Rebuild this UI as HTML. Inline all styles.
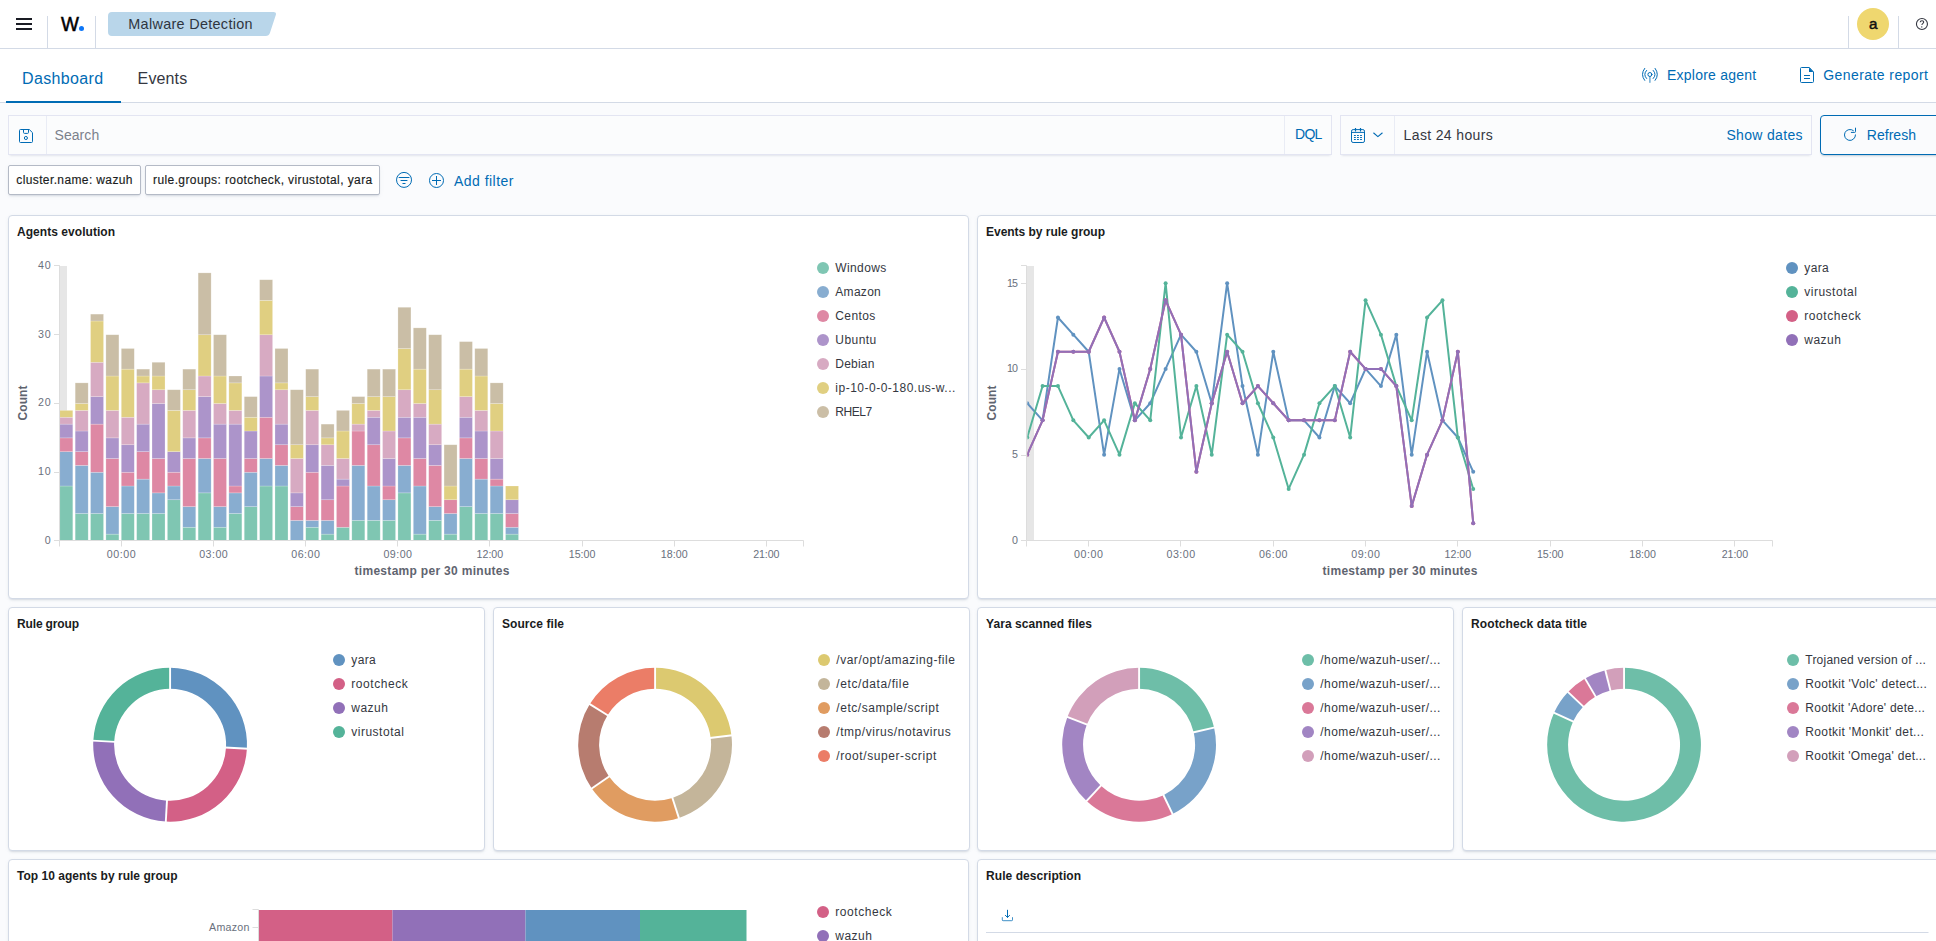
<!DOCTYPE html>
<html lang="en"><head><meta charset="utf-8"><title>Malware Detection - Wazuh</title>
<style>
*{box-sizing:border-box;margin:0;padding:0}
html,body{width:1936px;height:941px;overflow:hidden;background:#fafbfd;}
body{font-family:"Liberation Sans",sans-serif;color:#343741;position:relative;-webkit-font-smoothing:antialiased}
.t{position:absolute;white-space:nowrap;display:block}
.abs{position:absolute}
header{position:absolute;left:0;top:0;width:1936px;height:49px;background:#fff;border-bottom:1px solid #d3dae6}
.vsep{position:absolute;width:1px;background:#d3dae6;top:16px;height:32px}
nav.tabs{position:absolute;left:0;top:49px;width:1936px;height:54px;background:#fff;border-bottom:1px solid #d3dae6}
.ctl{position:absolute;background:#fbfcfd;box-shadow:0 1px 1px -1px rgba(152,162,179,.2),0 3px 2px -2px rgba(152,162,179,.2),inset 0 0 0 1px rgba(19,34,149,.1)}
.pill{position:absolute;top:165px;height:30px;background:#fff;border:1px solid #b4bac6;border-radius:2px;box-shadow:0 2px 2px -1px rgba(152,162,179,.3),0 1px 5px -2px rgba(152,162,179,.3)}
.panel{position:absolute;background:#fff;border:1px solid #d3dae6;border-radius:4px;box-shadow:0 2px 2px -1px rgba(152,162,179,.3),0 1px 5px -2px rgba(152,162,179,.3);overflow:hidden}
.panel svg{position:absolute;left:-1px;top:-1px;font-family:"Liberation Sans",sans-serif}
svg text{font-family:"Liberation Sans",sans-serif}
h2.pt{position:absolute;left:8px;font-size:12px;font-weight:700;color:#1a1c21;white-space:nowrap}
</style></head><body>
<header>
<svg class="abs" style="left:16px;top:16px" width="16" height="16" viewBox="0 0 16 16"><path d="M0 3H16M0 8H16M0 13H16" stroke="#1a1c24" stroke-width="2" fill="none"/></svg>
<div class="vsep" style="left:47px"></div>
<span class="t" style="left:60.50px;top:11.32px;font-size:20.2px;line-height:26px;color:#000;font-weight:400;letter-spacing:0.000px;-webkit-text-stroke:0.55px #000;transform:scaleX(0.94);transform-origin:0 0;">W</span>
<div class="abs" style="left:78.95px;top:26.35px;width:5px;height:5px;border-radius:50%;background:#0d76f7"></div>
<div class="vsep" style="left:95px"></div>
<svg class="abs" style="left:108px;top:12px" width="170" height="24" viewBox="0 0 170 24"><path d="M4 0H165.6Q168.8 0 167.8 3L161.9 21Q160.9 24 157.7 24H4Q0 24 0 20V4Q0 0 4 0Z" fill="#b9d6ea"/></svg>
<span class="t" style="left:128.30px;top:14.54px;font-size:14.4px;line-height:19px;color:#2f3540;font-weight:400;letter-spacing:0.316px;">Malware Detection</span>
<div class="vsep" style="left:1848px"></div>
<div class="abs" style="left:1857px;top:8px;width:32px;height:32px;border-radius:50%;background:#efd76f"></div>
<span class="t" style="left:1868.90px;top:13.98px;font-size:15.2px;line-height:20px;color:#111;font-weight:400;letter-spacing:0.000px;-webkit-text-stroke:0.5px #111;">a</span>
<div class="vsep" style="left:1898px"></div>
<svg class="abs" style="left:1914px;top:16px" width="16" height="16" viewBox="0 0 16 16"><circle cx="7.95" cy="8" r="5.5" fill="none" stroke="#343741" stroke-width="1.1"/><path d="M6.2 6.3Q6.3 4.7 8 4.7Q9.7 4.7 9.7 6.1Q9.7 7 8.7 7.6Q7.9 8.1 7.85 8.9" fill="none" stroke="#343741" stroke-width="1.1"/><circle cx="7.75" cy="10.9" r="0.7" fill="#343741"/></svg>
</header>
<nav class="tabs">
</nav>
<span class="t" style="left:22.00px;top:68.31px;font-size:16px;line-height:21px;color:#006BB4;font-weight:400;letter-spacing:0.367px;">Dashboard</span>
<div class="abs" style="left:6px;top:101px;width:115px;height:2px;background:#006BB4"></div>
<span class="t" style="left:137.60px;top:68.31px;font-size:16px;line-height:21px;color:#343741;font-weight:400;letter-spacing:0.138px;">Events</span>
<svg class="abs" style="left:1641px;top:67px" width="18" height="16" viewBox="0 0 18 16"><g fill="none" stroke="#006BB4" stroke-width="1" stroke-linecap="round"><circle cx="8.9" cy="7.5" r="2"/><path d="M8.9 9.9V15.2" stroke-width="1.4" stroke-opacity="0.6"/><path d="M5.6 3.4Q1.8 7.5 5.6 11.5"/><path d="M12.2 3.4Q16 7.5 12.2 11.5"/><path d="M3.7 1.4Q-0.9 7.5 3.7 13.4"/><path d="M14.1 1.4Q18.7 7.5 14.1 13.4"/></g></svg>
<span class="t" style="left:1667.00px;top:66.17px;font-size:14px;line-height:18px;color:#006BB4;font-weight:400;letter-spacing:0.226px;">Explore agent</span>
<svg class="abs" style="left:1800px;top:67px" width="14" height="16" viewBox="0 0 14 16"><path d="M1.5 .5H9.4L13.5 5V14.5Q13.5 15.5 12.5 15.5H1.5Q.5 15.5 .5 14.5V1.5Q.5 .5 1.5 .5Z" fill="none" stroke="#006BB4" stroke-width="1"/><path d="M9 .5V5H13.5Z" fill="#006BB4"/><path d="M4.4 8.5H9.6M4.4 11.5H9.6" stroke="#006BB4" stroke-width="1" stroke-linecap="round"/></svg>
<span class="t" style="left:1823.20px;top:66.17px;font-size:14px;line-height:18px;color:#006BB4;font-weight:400;letter-spacing:0.427px;">Generate report</span>
<div class="ctl" style="left:8px;top:115px;width:1324px;height:40px"></div>
<div class="abs" style="left:46px;top:116px;width:1px;height:38px;background:rgba(19,34,149,.075)"></div>
<div class="abs" style="left:1284px;top:116px;width:1px;height:38px;background:rgba(19,34,149,.075)"></div>
<svg class="abs" style="left:19px;top:129px" width="14" height="14" viewBox="0 0 14 14"><g fill="none" stroke="#006BB4" stroke-width="1"><path d="M1.5 .5H10.3L13.5 3.7V12.5Q13.5 13.5 12.5 13.5H1.5Q.5 13.5 .5 12.5V1.5Q.5 .5 1.5 .5Z"/><path d="M4.5 .5V3.4Q4.5 4.4 5.5 4.4H8.5Q9.5 4.4 9.5 3.4V.5"/><circle cx="6.9" cy="9" r="1.55"/></g></svg>
<span class="t" style="left:54.50px;top:125.57px;font-size:14px;line-height:18px;color:#7b818c;font-weight:400;letter-spacing:0.069px;">Search</span>
<span class="t" style="left:1295.00px;top:125.37px;font-size:14px;line-height:18px;color:#006BB4;font-weight:400;letter-spacing:-0.693px;">DQL</span>
<div class="ctl" style="left:1340px;top:115px;width:472px;height:40px"></div>
<div class="abs" style="left:1394px;top:116px;width:1px;height:38px;background:rgba(19,34,149,.075)"></div>
<svg class="abs" style="left:1351px;top:128px" width="14" height="15" viewBox="0 0 14 15"><g fill="none" stroke="#006BB4" stroke-width="1"><rect x="0.5" y="1.6" width="13" height="12.9" rx="1.6"/><path d="M0.5 4.4H13.5"/><path d="M4.5 0V3M9.5 0V3" stroke-width="1.2" stroke-linecap="round"/></g><g fill="#006BB4"><rect x="2.95" y="7.00" width="1.9" height="1" rx="0.3"/><rect x="2.95" y="9.00" width="1.9" height="1" rx="0.3"/><rect x="2.95" y="10.95" width="1.9" height="1" rx="0.3"/><rect x="6.00" y="7.00" width="1.9" height="1" rx="0.3"/><rect x="6.00" y="9.00" width="1.9" height="1" rx="0.3"/><rect x="6.00" y="10.95" width="1.9" height="1" rx="0.3"/><rect x="9.05" y="7.00" width="1.9" height="1" rx="0.3"/><rect x="9.05" y="9.00" width="1.9" height="1" rx="0.3"/><rect x="9.05" y="10.95" width="1.9" height="1" rx="0.3"/></g></svg>
<svg class="abs" style="left:1373px;top:132px" width="11" height="7" viewBox="0 0 11 7"><path d="M0.7 1L4.9 4.6L9.2 1" fill="none" stroke="#006BB4" stroke-width="1.1" stroke-linecap="round" stroke-linejoin="round"/></svg>
<span class="t" style="left:1403.60px;top:126.37px;font-size:14px;line-height:18px;color:#343741;font-weight:400;letter-spacing:0.356px;">Last 24 hours</span>
<span class="t" style="left:1726.40px;top:126.17px;font-size:14px;line-height:18px;color:#006BB4;font-weight:400;letter-spacing:0.338px;">Show dates</span>
<div class="abs" style="left:1820px;top:115px;width:130px;height:40px;border:1px solid #006BB4;border-radius:4px;box-shadow:0 2px 2px -1px rgba(54,97,126,.3)"></div>
<svg class="abs" style="left:1843px;top:127px" width="15" height="15" viewBox="0 0 15 15"><g fill="none" stroke="#006BB4" stroke-width="1" stroke-linecap="round"><path d="M12.5 7.9A5.5 5.5 0 1 1 10.37 3.57"/><path d="M12.5 1.1V4.6Q12.5 5.4 11.7 5.4H8.3"/></g></svg>
<span class="t" style="left:1866.80px;top:126.17px;font-size:14px;line-height:18px;color:#006BB4;font-weight:400;letter-spacing:0.030px;">Refresh</span>
<div class="pill" style="left:8px;width:133px"></div>
<span class="t" style="left:16.30px;top:172.03px;font-size:12px;line-height:16px;color:#1a1c21;font-weight:400;letter-spacing:0.379px;-webkit-text-stroke:0.15px #1a1c21;">cluster.name: wazuh</span>
<div class="pill" style="left:145px;width:235px"></div>
<span class="t" style="left:153.00px;top:172.03px;font-size:12px;line-height:16px;color:#1a1c21;font-weight:400;letter-spacing:0.405px;-webkit-text-stroke:0.15px #1a1c21;">rule.groups: rootcheck, virustotal, yara</span>
<svg class="abs" style="left:395px;top:171px" width="18" height="18" viewBox="0 0 18 18"><circle cx="9.03" cy="8.9" r="7.5" fill="none" stroke="#006BB4" stroke-width="1"/><path d="M4.1 6.45H14M6 9.5H12M7.9 12.5H10.1" stroke="#006BB4" stroke-width="1.1" fill="none" stroke-linecap="round"/></svg>
<svg class="abs" style="left:428px;top:172px" width="18" height="18" viewBox="0 0 18 18"><circle cx="8.5" cy="8.5" r="7" fill="none" stroke="#006BB4" stroke-width="1"/><path d="M8.5 4V13M4 8.5H13" stroke="#006BB4" stroke-width="1" fill="none"/></svg>
<span class="t" style="left:453.90px;top:172.37px;font-size:14px;line-height:18px;color:#006BB4;font-weight:400;letter-spacing:0.484px;">Add filter</span>
<section class="panel" style="left:8px;top:215px;width:961px;height:384px"><h2 class="pt" style="top:8px;line-height:16px;letter-spacing:0.045px">Agents evolution</h2><svg width="961" height="384" viewBox="8 215 961 384"><rect x="60" y="266" width="7" height="275" fill="#e6e6e6"/>
<rect x="59.80" y="486.00" width="13.0" height="55.00" fill="#7fc6b2" stroke="#fff" stroke-opacity="0.35" stroke-width="0.6"/>
<rect x="59.80" y="451.62" width="13.0" height="34.38" fill="#88add0" stroke="#fff" stroke-opacity="0.35" stroke-width="0.6"/>
<rect x="59.80" y="437.88" width="13.0" height="13.75" fill="#de88a4" stroke="#fff" stroke-opacity="0.35" stroke-width="0.6"/>
<rect x="59.80" y="424.12" width="13.0" height="13.75" fill="#ac94ca" stroke="#fff" stroke-opacity="0.35" stroke-width="0.6"/>
<rect x="59.80" y="417.25" width="13.0" height="6.88" fill="#d7aac2" stroke="#fff" stroke-opacity="0.35" stroke-width="0.6"/>
<rect x="59.80" y="410.38" width="13.0" height="6.88" fill="#e0cf81" stroke="#fff" stroke-opacity="0.35" stroke-width="0.6"/>
<rect x="75.17" y="513.50" width="13.0" height="27.50" fill="#7fc6b2" stroke="#fff" stroke-opacity="0.35" stroke-width="0.6"/>
<rect x="75.17" y="465.38" width="13.0" height="48.12" fill="#88add0" stroke="#fff" stroke-opacity="0.35" stroke-width="0.6"/>
<rect x="75.17" y="451.62" width="13.0" height="13.75" fill="#de88a4" stroke="#fff" stroke-opacity="0.35" stroke-width="0.6"/>
<rect x="75.17" y="431.00" width="13.0" height="20.62" fill="#ac94ca" stroke="#fff" stroke-opacity="0.35" stroke-width="0.6"/>
<rect x="75.17" y="410.38" width="13.0" height="20.62" fill="#d7aac2" stroke="#fff" stroke-opacity="0.35" stroke-width="0.6"/>
<rect x="75.17" y="403.50" width="13.0" height="6.88" fill="#e0cf81" stroke="#fff" stroke-opacity="0.35" stroke-width="0.6"/>
<rect x="75.17" y="382.88" width="13.0" height="20.62" fill="#cabea6" stroke="#fff" stroke-opacity="0.35" stroke-width="0.6"/>
<rect x="90.54" y="513.50" width="13.0" height="27.50" fill="#7fc6b2" stroke="#fff" stroke-opacity="0.35" stroke-width="0.6"/>
<rect x="90.54" y="472.25" width="13.0" height="41.25" fill="#88add0" stroke="#fff" stroke-opacity="0.35" stroke-width="0.6"/>
<rect x="90.54" y="424.12" width="13.0" height="48.12" fill="#de88a4" stroke="#fff" stroke-opacity="0.35" stroke-width="0.6"/>
<rect x="90.54" y="396.62" width="13.0" height="27.50" fill="#ac94ca" stroke="#fff" stroke-opacity="0.35" stroke-width="0.6"/>
<rect x="90.54" y="362.25" width="13.0" height="34.38" fill="#d7aac2" stroke="#fff" stroke-opacity="0.35" stroke-width="0.6"/>
<rect x="90.54" y="321.00" width="13.0" height="41.25" fill="#e0cf81" stroke="#fff" stroke-opacity="0.35" stroke-width="0.6"/>
<rect x="90.54" y="314.12" width="13.0" height="6.88" fill="#cabea6" stroke="#fff" stroke-opacity="0.35" stroke-width="0.6"/>
<rect x="105.91" y="534.12" width="13.0" height="6.88" fill="#7fc6b2" stroke="#fff" stroke-opacity="0.35" stroke-width="0.6"/>
<rect x="105.91" y="506.62" width="13.0" height="27.50" fill="#88add0" stroke="#fff" stroke-opacity="0.35" stroke-width="0.6"/>
<rect x="105.91" y="458.50" width="13.0" height="48.12" fill="#de88a4" stroke="#fff" stroke-opacity="0.35" stroke-width="0.6"/>
<rect x="105.91" y="437.88" width="13.0" height="20.62" fill="#ac94ca" stroke="#fff" stroke-opacity="0.35" stroke-width="0.6"/>
<rect x="105.91" y="410.38" width="13.0" height="27.50" fill="#d7aac2" stroke="#fff" stroke-opacity="0.35" stroke-width="0.6"/>
<rect x="105.91" y="376.00" width="13.0" height="34.38" fill="#e0cf81" stroke="#fff" stroke-opacity="0.35" stroke-width="0.6"/>
<rect x="105.91" y="334.75" width="13.0" height="41.25" fill="#cabea6" stroke="#fff" stroke-opacity="0.35" stroke-width="0.6"/>
<rect x="121.28" y="513.50" width="13.0" height="27.50" fill="#7fc6b2" stroke="#fff" stroke-opacity="0.35" stroke-width="0.6"/>
<rect x="121.28" y="486.00" width="13.0" height="27.50" fill="#88add0" stroke="#fff" stroke-opacity="0.35" stroke-width="0.6"/>
<rect x="121.28" y="472.25" width="13.0" height="13.75" fill="#de88a4" stroke="#fff" stroke-opacity="0.35" stroke-width="0.6"/>
<rect x="121.28" y="444.75" width="13.0" height="27.50" fill="#ac94ca" stroke="#fff" stroke-opacity="0.35" stroke-width="0.6"/>
<rect x="121.28" y="417.25" width="13.0" height="27.50" fill="#d7aac2" stroke="#fff" stroke-opacity="0.35" stroke-width="0.6"/>
<rect x="121.28" y="369.12" width="13.0" height="48.12" fill="#e0cf81" stroke="#fff" stroke-opacity="0.35" stroke-width="0.6"/>
<rect x="121.28" y="348.50" width="13.0" height="20.62" fill="#cabea6" stroke="#fff" stroke-opacity="0.35" stroke-width="0.6"/>
<rect x="136.65" y="513.50" width="13.0" height="27.50" fill="#7fc6b2" stroke="#fff" stroke-opacity="0.35" stroke-width="0.6"/>
<rect x="136.65" y="479.12" width="13.0" height="34.38" fill="#88add0" stroke="#fff" stroke-opacity="0.35" stroke-width="0.6"/>
<rect x="136.65" y="451.62" width="13.0" height="27.50" fill="#de88a4" stroke="#fff" stroke-opacity="0.35" stroke-width="0.6"/>
<rect x="136.65" y="424.12" width="13.0" height="27.50" fill="#ac94ca" stroke="#fff" stroke-opacity="0.35" stroke-width="0.6"/>
<rect x="136.65" y="382.88" width="13.0" height="41.25" fill="#d7aac2" stroke="#fff" stroke-opacity="0.35" stroke-width="0.6"/>
<rect x="136.65" y="376.00" width="13.0" height="6.88" fill="#e0cf81" stroke="#fff" stroke-opacity="0.35" stroke-width="0.6"/>
<rect x="136.65" y="369.12" width="13.0" height="6.88" fill="#cabea6" stroke="#fff" stroke-opacity="0.35" stroke-width="0.6"/>
<rect x="152.02" y="513.50" width="13.0" height="27.50" fill="#7fc6b2" stroke="#fff" stroke-opacity="0.35" stroke-width="0.6"/>
<rect x="152.02" y="492.88" width="13.0" height="20.62" fill="#88add0" stroke="#fff" stroke-opacity="0.35" stroke-width="0.6"/>
<rect x="152.02" y="458.50" width="13.0" height="34.38" fill="#de88a4" stroke="#fff" stroke-opacity="0.35" stroke-width="0.6"/>
<rect x="152.02" y="403.50" width="13.0" height="55.00" fill="#ac94ca" stroke="#fff" stroke-opacity="0.35" stroke-width="0.6"/>
<rect x="152.02" y="389.75" width="13.0" height="13.75" fill="#d7aac2" stroke="#fff" stroke-opacity="0.35" stroke-width="0.6"/>
<rect x="152.02" y="376.00" width="13.0" height="13.75" fill="#e0cf81" stroke="#fff" stroke-opacity="0.35" stroke-width="0.6"/>
<rect x="152.02" y="362.25" width="13.0" height="13.75" fill="#cabea6" stroke="#fff" stroke-opacity="0.35" stroke-width="0.6"/>
<rect x="167.39" y="499.75" width="13.0" height="41.25" fill="#7fc6b2" stroke="#fff" stroke-opacity="0.35" stroke-width="0.6"/>
<rect x="167.39" y="486.00" width="13.0" height="13.75" fill="#88add0" stroke="#fff" stroke-opacity="0.35" stroke-width="0.6"/>
<rect x="167.39" y="472.25" width="13.0" height="13.75" fill="#de88a4" stroke="#fff" stroke-opacity="0.35" stroke-width="0.6"/>
<rect x="167.39" y="451.62" width="13.0" height="20.62" fill="#ac94ca" stroke="#fff" stroke-opacity="0.35" stroke-width="0.6"/>
<rect x="167.39" y="410.38" width="13.0" height="41.25" fill="#e0cf81" stroke="#fff" stroke-opacity="0.35" stroke-width="0.6"/>
<rect x="167.39" y="389.75" width="13.0" height="20.62" fill="#cabea6" stroke="#fff" stroke-opacity="0.35" stroke-width="0.6"/>
<rect x="182.76" y="527.25" width="13.0" height="13.75" fill="#7fc6b2" stroke="#fff" stroke-opacity="0.35" stroke-width="0.6"/>
<rect x="182.76" y="506.62" width="13.0" height="20.62" fill="#88add0" stroke="#fff" stroke-opacity="0.35" stroke-width="0.6"/>
<rect x="182.76" y="458.50" width="13.0" height="48.12" fill="#de88a4" stroke="#fff" stroke-opacity="0.35" stroke-width="0.6"/>
<rect x="182.76" y="437.88" width="13.0" height="20.62" fill="#ac94ca" stroke="#fff" stroke-opacity="0.35" stroke-width="0.6"/>
<rect x="182.76" y="410.38" width="13.0" height="27.50" fill="#d7aac2" stroke="#fff" stroke-opacity="0.35" stroke-width="0.6"/>
<rect x="182.76" y="389.75" width="13.0" height="20.62" fill="#e0cf81" stroke="#fff" stroke-opacity="0.35" stroke-width="0.6"/>
<rect x="182.76" y="369.12" width="13.0" height="20.62" fill="#cabea6" stroke="#fff" stroke-opacity="0.35" stroke-width="0.6"/>
<rect x="198.13" y="492.88" width="13.0" height="48.12" fill="#7fc6b2" stroke="#fff" stroke-opacity="0.35" stroke-width="0.6"/>
<rect x="198.13" y="458.50" width="13.0" height="34.38" fill="#88add0" stroke="#fff" stroke-opacity="0.35" stroke-width="0.6"/>
<rect x="198.13" y="437.88" width="13.0" height="20.62" fill="#de88a4" stroke="#fff" stroke-opacity="0.35" stroke-width="0.6"/>
<rect x="198.13" y="396.62" width="13.0" height="41.25" fill="#ac94ca" stroke="#fff" stroke-opacity="0.35" stroke-width="0.6"/>
<rect x="198.13" y="376.00" width="13.0" height="20.62" fill="#d7aac2" stroke="#fff" stroke-opacity="0.35" stroke-width="0.6"/>
<rect x="198.13" y="334.75" width="13.0" height="41.25" fill="#e0cf81" stroke="#fff" stroke-opacity="0.35" stroke-width="0.6"/>
<rect x="198.13" y="272.88" width="13.0" height="61.88" fill="#cabea6" stroke="#fff" stroke-opacity="0.35" stroke-width="0.6"/>
<rect x="213.50" y="527.25" width="13.0" height="13.75" fill="#7fc6b2" stroke="#fff" stroke-opacity="0.35" stroke-width="0.6"/>
<rect x="213.50" y="506.62" width="13.0" height="20.62" fill="#88add0" stroke="#fff" stroke-opacity="0.35" stroke-width="0.6"/>
<rect x="213.50" y="458.50" width="13.0" height="48.12" fill="#de88a4" stroke="#fff" stroke-opacity="0.35" stroke-width="0.6"/>
<rect x="213.50" y="424.12" width="13.0" height="34.38" fill="#ac94ca" stroke="#fff" stroke-opacity="0.35" stroke-width="0.6"/>
<rect x="213.50" y="403.50" width="13.0" height="20.62" fill="#d7aac2" stroke="#fff" stroke-opacity="0.35" stroke-width="0.6"/>
<rect x="213.50" y="376.00" width="13.0" height="27.50" fill="#e0cf81" stroke="#fff" stroke-opacity="0.35" stroke-width="0.6"/>
<rect x="213.50" y="334.75" width="13.0" height="41.25" fill="#cabea6" stroke="#fff" stroke-opacity="0.35" stroke-width="0.6"/>
<rect x="228.87" y="513.50" width="13.0" height="27.50" fill="#7fc6b2" stroke="#fff" stroke-opacity="0.35" stroke-width="0.6"/>
<rect x="228.87" y="492.88" width="13.0" height="20.62" fill="#88add0" stroke="#fff" stroke-opacity="0.35" stroke-width="0.6"/>
<rect x="228.87" y="486.00" width="13.0" height="6.88" fill="#de88a4" stroke="#fff" stroke-opacity="0.35" stroke-width="0.6"/>
<rect x="228.87" y="424.12" width="13.0" height="61.88" fill="#ac94ca" stroke="#fff" stroke-opacity="0.35" stroke-width="0.6"/>
<rect x="228.87" y="410.38" width="13.0" height="13.75" fill="#d7aac2" stroke="#fff" stroke-opacity="0.35" stroke-width="0.6"/>
<rect x="228.87" y="382.88" width="13.0" height="27.50" fill="#e0cf81" stroke="#fff" stroke-opacity="0.35" stroke-width="0.6"/>
<rect x="228.87" y="376.00" width="13.0" height="6.88" fill="#cabea6" stroke="#fff" stroke-opacity="0.35" stroke-width="0.6"/>
<rect x="244.24" y="506.62" width="13.0" height="34.38" fill="#7fc6b2" stroke="#fff" stroke-opacity="0.35" stroke-width="0.6"/>
<rect x="244.24" y="472.25" width="13.0" height="34.38" fill="#88add0" stroke="#fff" stroke-opacity="0.35" stroke-width="0.6"/>
<rect x="244.24" y="458.50" width="13.0" height="13.75" fill="#de88a4" stroke="#fff" stroke-opacity="0.35" stroke-width="0.6"/>
<rect x="244.24" y="431.00" width="13.0" height="27.50" fill="#ac94ca" stroke="#fff" stroke-opacity="0.35" stroke-width="0.6"/>
<rect x="244.24" y="417.25" width="13.0" height="13.75" fill="#e0cf81" stroke="#fff" stroke-opacity="0.35" stroke-width="0.6"/>
<rect x="244.24" y="396.62" width="13.0" height="20.62" fill="#cabea6" stroke="#fff" stroke-opacity="0.35" stroke-width="0.6"/>
<rect x="259.61" y="486.00" width="13.0" height="55.00" fill="#7fc6b2" stroke="#fff" stroke-opacity="0.35" stroke-width="0.6"/>
<rect x="259.61" y="458.50" width="13.0" height="27.50" fill="#88add0" stroke="#fff" stroke-opacity="0.35" stroke-width="0.6"/>
<rect x="259.61" y="417.25" width="13.0" height="41.25" fill="#de88a4" stroke="#fff" stroke-opacity="0.35" stroke-width="0.6"/>
<rect x="259.61" y="376.00" width="13.0" height="41.25" fill="#ac94ca" stroke="#fff" stroke-opacity="0.35" stroke-width="0.6"/>
<rect x="259.61" y="334.75" width="13.0" height="41.25" fill="#d7aac2" stroke="#fff" stroke-opacity="0.35" stroke-width="0.6"/>
<rect x="259.61" y="300.38" width="13.0" height="34.38" fill="#e0cf81" stroke="#fff" stroke-opacity="0.35" stroke-width="0.6"/>
<rect x="259.61" y="279.75" width="13.0" height="20.62" fill="#cabea6" stroke="#fff" stroke-opacity="0.35" stroke-width="0.6"/>
<rect x="274.98" y="486.00" width="13.0" height="55.00" fill="#7fc6b2" stroke="#fff" stroke-opacity="0.35" stroke-width="0.6"/>
<rect x="274.98" y="465.38" width="13.0" height="20.62" fill="#88add0" stroke="#fff" stroke-opacity="0.35" stroke-width="0.6"/>
<rect x="274.98" y="444.75" width="13.0" height="20.62" fill="#de88a4" stroke="#fff" stroke-opacity="0.35" stroke-width="0.6"/>
<rect x="274.98" y="424.12" width="13.0" height="20.62" fill="#ac94ca" stroke="#fff" stroke-opacity="0.35" stroke-width="0.6"/>
<rect x="274.98" y="389.75" width="13.0" height="34.38" fill="#d7aac2" stroke="#fff" stroke-opacity="0.35" stroke-width="0.6"/>
<rect x="274.98" y="382.88" width="13.0" height="6.88" fill="#e0cf81" stroke="#fff" stroke-opacity="0.35" stroke-width="0.6"/>
<rect x="274.98" y="348.50" width="13.0" height="34.38" fill="#cabea6" stroke="#fff" stroke-opacity="0.35" stroke-width="0.6"/>
<rect x="290.35" y="520.38" width="13.0" height="20.62" fill="#88add0" stroke="#fff" stroke-opacity="0.35" stroke-width="0.6"/>
<rect x="290.35" y="506.62" width="13.0" height="13.75" fill="#de88a4" stroke="#fff" stroke-opacity="0.35" stroke-width="0.6"/>
<rect x="290.35" y="492.88" width="13.0" height="13.75" fill="#ac94ca" stroke="#fff" stroke-opacity="0.35" stroke-width="0.6"/>
<rect x="290.35" y="458.50" width="13.0" height="34.38" fill="#d7aac2" stroke="#fff" stroke-opacity="0.35" stroke-width="0.6"/>
<rect x="290.35" y="444.75" width="13.0" height="13.75" fill="#e0cf81" stroke="#fff" stroke-opacity="0.35" stroke-width="0.6"/>
<rect x="290.35" y="389.75" width="13.0" height="55.00" fill="#cabea6" stroke="#fff" stroke-opacity="0.35" stroke-width="0.6"/>
<rect x="305.72" y="527.25" width="13.0" height="13.75" fill="#7fc6b2" stroke="#fff" stroke-opacity="0.35" stroke-width="0.6"/>
<rect x="305.72" y="520.38" width="13.0" height="6.88" fill="#88add0" stroke="#fff" stroke-opacity="0.35" stroke-width="0.6"/>
<rect x="305.72" y="472.25" width="13.0" height="48.12" fill="#de88a4" stroke="#fff" stroke-opacity="0.35" stroke-width="0.6"/>
<rect x="305.72" y="444.75" width="13.0" height="27.50" fill="#ac94ca" stroke="#fff" stroke-opacity="0.35" stroke-width="0.6"/>
<rect x="305.72" y="410.38" width="13.0" height="34.38" fill="#d7aac2" stroke="#fff" stroke-opacity="0.35" stroke-width="0.6"/>
<rect x="305.72" y="396.62" width="13.0" height="13.75" fill="#e0cf81" stroke="#fff" stroke-opacity="0.35" stroke-width="0.6"/>
<rect x="305.72" y="369.12" width="13.0" height="27.50" fill="#cabea6" stroke="#fff" stroke-opacity="0.35" stroke-width="0.6"/>
<rect x="321.09" y="534.12" width="13.0" height="6.88" fill="#7fc6b2" stroke="#fff" stroke-opacity="0.35" stroke-width="0.6"/>
<rect x="321.09" y="520.38" width="13.0" height="13.75" fill="#88add0" stroke="#fff" stroke-opacity="0.35" stroke-width="0.6"/>
<rect x="321.09" y="499.75" width="13.0" height="20.62" fill="#de88a4" stroke="#fff" stroke-opacity="0.35" stroke-width="0.6"/>
<rect x="321.09" y="465.38" width="13.0" height="34.38" fill="#ac94ca" stroke="#fff" stroke-opacity="0.35" stroke-width="0.6"/>
<rect x="321.09" y="444.75" width="13.0" height="20.62" fill="#d7aac2" stroke="#fff" stroke-opacity="0.35" stroke-width="0.6"/>
<rect x="321.09" y="437.88" width="13.0" height="6.88" fill="#e0cf81" stroke="#fff" stroke-opacity="0.35" stroke-width="0.6"/>
<rect x="321.09" y="424.12" width="13.0" height="13.75" fill="#cabea6" stroke="#fff" stroke-opacity="0.35" stroke-width="0.6"/>
<rect x="336.46" y="527.25" width="13.0" height="13.75" fill="#7fc6b2" stroke="#fff" stroke-opacity="0.35" stroke-width="0.6"/>
<rect x="336.46" y="486.00" width="13.0" height="41.25" fill="#de88a4" stroke="#fff" stroke-opacity="0.35" stroke-width="0.6"/>
<rect x="336.46" y="479.12" width="13.0" height="6.88" fill="#ac94ca" stroke="#fff" stroke-opacity="0.35" stroke-width="0.6"/>
<rect x="336.46" y="458.50" width="13.0" height="20.62" fill="#d7aac2" stroke="#fff" stroke-opacity="0.35" stroke-width="0.6"/>
<rect x="336.46" y="431.00" width="13.0" height="27.50" fill="#e0cf81" stroke="#fff" stroke-opacity="0.35" stroke-width="0.6"/>
<rect x="336.46" y="410.38" width="13.0" height="20.62" fill="#cabea6" stroke="#fff" stroke-opacity="0.35" stroke-width="0.6"/>
<rect x="351.83" y="520.38" width="13.0" height="20.62" fill="#7fc6b2" stroke="#fff" stroke-opacity="0.35" stroke-width="0.6"/>
<rect x="351.83" y="465.38" width="13.0" height="55.00" fill="#88add0" stroke="#fff" stroke-opacity="0.35" stroke-width="0.6"/>
<rect x="351.83" y="431.00" width="13.0" height="34.38" fill="#de88a4" stroke="#fff" stroke-opacity="0.35" stroke-width="0.6"/>
<rect x="351.83" y="424.12" width="13.0" height="6.88" fill="#d7aac2" stroke="#fff" stroke-opacity="0.35" stroke-width="0.6"/>
<rect x="351.83" y="403.50" width="13.0" height="20.62" fill="#e0cf81" stroke="#fff" stroke-opacity="0.35" stroke-width="0.6"/>
<rect x="351.83" y="396.62" width="13.0" height="6.88" fill="#cabea6" stroke="#fff" stroke-opacity="0.35" stroke-width="0.6"/>
<rect x="367.20" y="520.38" width="13.0" height="20.62" fill="#7fc6b2" stroke="#fff" stroke-opacity="0.35" stroke-width="0.6"/>
<rect x="367.20" y="486.00" width="13.0" height="34.38" fill="#88add0" stroke="#fff" stroke-opacity="0.35" stroke-width="0.6"/>
<rect x="367.20" y="444.75" width="13.0" height="41.25" fill="#de88a4" stroke="#fff" stroke-opacity="0.35" stroke-width="0.6"/>
<rect x="367.20" y="417.25" width="13.0" height="27.50" fill="#ac94ca" stroke="#fff" stroke-opacity="0.35" stroke-width="0.6"/>
<rect x="367.20" y="410.38" width="13.0" height="6.88" fill="#d7aac2" stroke="#fff" stroke-opacity="0.35" stroke-width="0.6"/>
<rect x="367.20" y="396.62" width="13.0" height="13.75" fill="#e0cf81" stroke="#fff" stroke-opacity="0.35" stroke-width="0.6"/>
<rect x="367.20" y="369.12" width="13.0" height="27.50" fill="#cabea6" stroke="#fff" stroke-opacity="0.35" stroke-width="0.6"/>
<rect x="382.57" y="520.38" width="13.0" height="20.62" fill="#7fc6b2" stroke="#fff" stroke-opacity="0.35" stroke-width="0.6"/>
<rect x="382.57" y="499.75" width="13.0" height="20.62" fill="#88add0" stroke="#fff" stroke-opacity="0.35" stroke-width="0.6"/>
<rect x="382.57" y="486.00" width="13.0" height="13.75" fill="#de88a4" stroke="#fff" stroke-opacity="0.35" stroke-width="0.6"/>
<rect x="382.57" y="458.50" width="13.0" height="27.50" fill="#ac94ca" stroke="#fff" stroke-opacity="0.35" stroke-width="0.6"/>
<rect x="382.57" y="431.00" width="13.0" height="27.50" fill="#d7aac2" stroke="#fff" stroke-opacity="0.35" stroke-width="0.6"/>
<rect x="382.57" y="396.62" width="13.0" height="34.38" fill="#e0cf81" stroke="#fff" stroke-opacity="0.35" stroke-width="0.6"/>
<rect x="382.57" y="369.12" width="13.0" height="27.50" fill="#cabea6" stroke="#fff" stroke-opacity="0.35" stroke-width="0.6"/>
<rect x="397.94" y="492.88" width="13.0" height="48.12" fill="#7fc6b2" stroke="#fff" stroke-opacity="0.35" stroke-width="0.6"/>
<rect x="397.94" y="465.38" width="13.0" height="27.50" fill="#88add0" stroke="#fff" stroke-opacity="0.35" stroke-width="0.6"/>
<rect x="397.94" y="437.88" width="13.0" height="27.50" fill="#de88a4" stroke="#fff" stroke-opacity="0.35" stroke-width="0.6"/>
<rect x="397.94" y="417.25" width="13.0" height="20.62" fill="#ac94ca" stroke="#fff" stroke-opacity="0.35" stroke-width="0.6"/>
<rect x="397.94" y="389.75" width="13.0" height="27.50" fill="#d7aac2" stroke="#fff" stroke-opacity="0.35" stroke-width="0.6"/>
<rect x="397.94" y="348.50" width="13.0" height="41.25" fill="#e0cf81" stroke="#fff" stroke-opacity="0.35" stroke-width="0.6"/>
<rect x="397.94" y="307.25" width="13.0" height="41.25" fill="#cabea6" stroke="#fff" stroke-opacity="0.35" stroke-width="0.6"/>
<rect x="413.31" y="534.12" width="13.0" height="6.88" fill="#7fc6b2" stroke="#fff" stroke-opacity="0.35" stroke-width="0.6"/>
<rect x="413.31" y="486.00" width="13.0" height="48.12" fill="#88add0" stroke="#fff" stroke-opacity="0.35" stroke-width="0.6"/>
<rect x="413.31" y="458.50" width="13.0" height="27.50" fill="#de88a4" stroke="#fff" stroke-opacity="0.35" stroke-width="0.6"/>
<rect x="413.31" y="417.25" width="13.0" height="41.25" fill="#ac94ca" stroke="#fff" stroke-opacity="0.35" stroke-width="0.6"/>
<rect x="413.31" y="403.50" width="13.0" height="13.75" fill="#d7aac2" stroke="#fff" stroke-opacity="0.35" stroke-width="0.6"/>
<rect x="413.31" y="369.12" width="13.0" height="34.38" fill="#e0cf81" stroke="#fff" stroke-opacity="0.35" stroke-width="0.6"/>
<rect x="413.31" y="327.88" width="13.0" height="41.25" fill="#cabea6" stroke="#fff" stroke-opacity="0.35" stroke-width="0.6"/>
<rect x="428.68" y="520.38" width="13.0" height="20.62" fill="#7fc6b2" stroke="#fff" stroke-opacity="0.35" stroke-width="0.6"/>
<rect x="428.68" y="506.62" width="13.0" height="13.75" fill="#88add0" stroke="#fff" stroke-opacity="0.35" stroke-width="0.6"/>
<rect x="428.68" y="465.38" width="13.0" height="41.25" fill="#de88a4" stroke="#fff" stroke-opacity="0.35" stroke-width="0.6"/>
<rect x="428.68" y="444.75" width="13.0" height="20.62" fill="#ac94ca" stroke="#fff" stroke-opacity="0.35" stroke-width="0.6"/>
<rect x="428.68" y="424.12" width="13.0" height="20.62" fill="#d7aac2" stroke="#fff" stroke-opacity="0.35" stroke-width="0.6"/>
<rect x="428.68" y="389.75" width="13.0" height="34.38" fill="#e0cf81" stroke="#fff" stroke-opacity="0.35" stroke-width="0.6"/>
<rect x="428.68" y="334.75" width="13.0" height="55.00" fill="#cabea6" stroke="#fff" stroke-opacity="0.35" stroke-width="0.6"/>
<rect x="444.05" y="534.12" width="13.0" height="6.88" fill="#7fc6b2" stroke="#fff" stroke-opacity="0.35" stroke-width="0.6"/>
<rect x="444.05" y="513.50" width="13.0" height="20.62" fill="#88add0" stroke="#fff" stroke-opacity="0.35" stroke-width="0.6"/>
<rect x="444.05" y="499.75" width="13.0" height="13.75" fill="#de88a4" stroke="#fff" stroke-opacity="0.35" stroke-width="0.6"/>
<rect x="444.05" y="486.00" width="13.0" height="13.75" fill="#e0cf81" stroke="#fff" stroke-opacity="0.35" stroke-width="0.6"/>
<rect x="444.05" y="444.75" width="13.0" height="41.25" fill="#cabea6" stroke="#fff" stroke-opacity="0.35" stroke-width="0.6"/>
<rect x="459.42" y="506.62" width="13.0" height="34.38" fill="#7fc6b2" stroke="#fff" stroke-opacity="0.35" stroke-width="0.6"/>
<rect x="459.42" y="458.50" width="13.0" height="48.12" fill="#88add0" stroke="#fff" stroke-opacity="0.35" stroke-width="0.6"/>
<rect x="459.42" y="437.88" width="13.0" height="20.62" fill="#de88a4" stroke="#fff" stroke-opacity="0.35" stroke-width="0.6"/>
<rect x="459.42" y="417.25" width="13.0" height="20.62" fill="#ac94ca" stroke="#fff" stroke-opacity="0.35" stroke-width="0.6"/>
<rect x="459.42" y="396.62" width="13.0" height="20.62" fill="#d7aac2" stroke="#fff" stroke-opacity="0.35" stroke-width="0.6"/>
<rect x="459.42" y="369.12" width="13.0" height="27.50" fill="#e0cf81" stroke="#fff" stroke-opacity="0.35" stroke-width="0.6"/>
<rect x="459.42" y="341.62" width="13.0" height="27.50" fill="#cabea6" stroke="#fff" stroke-opacity="0.35" stroke-width="0.6"/>
<rect x="474.79" y="513.50" width="13.0" height="27.50" fill="#7fc6b2" stroke="#fff" stroke-opacity="0.35" stroke-width="0.6"/>
<rect x="474.79" y="479.12" width="13.0" height="34.38" fill="#88add0" stroke="#fff" stroke-opacity="0.35" stroke-width="0.6"/>
<rect x="474.79" y="458.50" width="13.0" height="20.62" fill="#de88a4" stroke="#fff" stroke-opacity="0.35" stroke-width="0.6"/>
<rect x="474.79" y="431.00" width="13.0" height="27.50" fill="#ac94ca" stroke="#fff" stroke-opacity="0.35" stroke-width="0.6"/>
<rect x="474.79" y="410.38" width="13.0" height="20.62" fill="#d7aac2" stroke="#fff" stroke-opacity="0.35" stroke-width="0.6"/>
<rect x="474.79" y="376.00" width="13.0" height="34.38" fill="#e0cf81" stroke="#fff" stroke-opacity="0.35" stroke-width="0.6"/>
<rect x="474.79" y="348.50" width="13.0" height="27.50" fill="#cabea6" stroke="#fff" stroke-opacity="0.35" stroke-width="0.6"/>
<rect x="490.16" y="513.50" width="13.0" height="27.50" fill="#7fc6b2" stroke="#fff" stroke-opacity="0.35" stroke-width="0.6"/>
<rect x="490.16" y="486.00" width="13.0" height="27.50" fill="#88add0" stroke="#fff" stroke-opacity="0.35" stroke-width="0.6"/>
<rect x="490.16" y="479.12" width="13.0" height="6.88" fill="#de88a4" stroke="#fff" stroke-opacity="0.35" stroke-width="0.6"/>
<rect x="490.16" y="458.50" width="13.0" height="20.62" fill="#ac94ca" stroke="#fff" stroke-opacity="0.35" stroke-width="0.6"/>
<rect x="490.16" y="431.00" width="13.0" height="27.50" fill="#d7aac2" stroke="#fff" stroke-opacity="0.35" stroke-width="0.6"/>
<rect x="490.16" y="403.50" width="13.0" height="27.50" fill="#e0cf81" stroke="#fff" stroke-opacity="0.35" stroke-width="0.6"/>
<rect x="490.16" y="382.88" width="13.0" height="20.62" fill="#cabea6" stroke="#fff" stroke-opacity="0.35" stroke-width="0.6"/>
<rect x="505.53" y="534.12" width="13.0" height="6.88" fill="#7fc6b2" stroke="#fff" stroke-opacity="0.35" stroke-width="0.6"/>
<rect x="505.53" y="527.25" width="13.0" height="6.88" fill="#88add0" stroke="#fff" stroke-opacity="0.35" stroke-width="0.6"/>
<rect x="505.53" y="513.50" width="13.0" height="13.75" fill="#de88a4" stroke="#fff" stroke-opacity="0.35" stroke-width="0.6"/>
<rect x="505.53" y="499.75" width="13.0" height="13.75" fill="#ac94ca" stroke="#fff" stroke-opacity="0.35" stroke-width="0.6"/>
<rect x="505.53" y="486.00" width="13.0" height="13.75" fill="#e0cf81" stroke="#fff" stroke-opacity="0.35" stroke-width="0.6"/>
<path d="M54 265.5H59.5V540.5H803.5V546.5" fill="none" stroke="#ddd"/>
<path d="M54 540.5H59.5" stroke="#ddd"/>
<text x="50.97" y="543.90" font-size="10.67" fill="#69707d" font-weight="400" text-anchor="end" letter-spacing="0.366" >0</text>
<path d="M54 472.5H59.5" stroke="#ddd"/>
<text x="51.43" y="475.15" font-size="10.67" fill="#69707d" font-weight="400" text-anchor="end" letter-spacing="0.833" >10</text>
<path d="M54 403.5H59.5" stroke="#ddd"/>
<text x="51.43" y="406.40" font-size="10.67" fill="#69707d" font-weight="400" text-anchor="end" letter-spacing="0.833" >20</text>
<path d="M54 334.5H59.5" stroke="#ddd"/>
<text x="51.43" y="337.65" font-size="10.67" fill="#69707d" font-weight="400" text-anchor="end" letter-spacing="0.833" >30</text>
<path d="M54 265.5H59.5" stroke="#ddd"/>
<text x="51.43" y="268.90" font-size="10.67" fill="#69707d" font-weight="400" text-anchor="end" letter-spacing="0.833" >40</text>
<path d="M59.5 540.5V546.5" stroke="#ddd"/>
<path d="M121.5 540.5V546.5" stroke="#ddd"/>
<text x="121.59" y="557.80" font-size="10.67" fill="#69707d" font-weight="400" text-anchor="middle" letter-spacing="0.575" >00:00</text>
<path d="M213.5 540.5V546.5" stroke="#ddd"/>
<text x="213.69" y="557.80" font-size="10.67" fill="#69707d" font-weight="400" text-anchor="middle" letter-spacing="0.475" >03:00</text>
<path d="M305.5 540.5V546.5" stroke="#ddd"/>
<text x="305.84" y="557.80" font-size="10.67" fill="#69707d" font-weight="400" text-anchor="middle" letter-spacing="0.475" >06:00</text>
<path d="M397.5 540.5V546.5" stroke="#ddd"/>
<text x="397.99" y="557.80" font-size="10.67" fill="#69707d" font-weight="400" text-anchor="middle" letter-spacing="0.475" >09:00</text>
<path d="M489.5 540.5V546.5" stroke="#ddd"/>
<text x="489.89" y="557.80" font-size="10.67" fill="#69707d" font-weight="400" text-anchor="middle" letter-spacing="-0.025" >12:00</text>
<path d="M582.5 540.5V546.5" stroke="#ddd"/>
<text x="582.04" y="557.80" font-size="10.67" fill="#69707d" font-weight="400" text-anchor="middle" letter-spacing="-0.025" >15:00</text>
<path d="M674.5 540.5V546.5" stroke="#ddd"/>
<text x="674.21" y="557.80" font-size="10.67" fill="#69707d" font-weight="400" text-anchor="middle" letter-spacing="0.025" >18:00</text>
<path d="M766.5 540.5V546.5" stroke="#ddd"/>
<text x="766.31" y="557.80" font-size="10.67" fill="#69707d" font-weight="400" text-anchor="middle" letter-spacing="-0.075" >21:00</text>
<text x="432.15" y="575.00" font-size="12" fill="#5f646f" font-weight="700" text-anchor="middle" letter-spacing="0.303" >timestamp per 30 minutes</text>
<g transform="translate(26.5,403) rotate(-90)"><text x="0.04" y="0.00" font-size="12" fill="#5f646f" font-weight="700" text-anchor="middle" letter-spacing="0.088" >Count</text></g>
<circle cx="823" cy="268" r="6" fill="#54B399" fill-opacity="0.75"/>
<text x="835.30" y="272.20" font-size="12" fill="#343741" font-weight="400" text-anchor="start" letter-spacing="0.387" >Windows</text>
<circle cx="823" cy="292" r="6" fill="#6092C0" fill-opacity="0.75"/>
<text x="835.30" y="296.20" font-size="12" fill="#343741" font-weight="400" text-anchor="start" letter-spacing="0.296" >Amazon</text>
<circle cx="823" cy="316" r="6" fill="#D36086" fill-opacity="0.75"/>
<text x="835.30" y="320.20" font-size="12" fill="#343741" font-weight="400" text-anchor="start" letter-spacing="0.396" >Centos</text>
<circle cx="823" cy="340" r="6" fill="#9170B8" fill-opacity="0.75"/>
<text x="835.30" y="344.20" font-size="12" fill="#343741" font-weight="400" text-anchor="start" letter-spacing="0.461" >Ubuntu</text>
<circle cx="823" cy="364" r="6" fill="#CA8EAE" fill-opacity="0.75"/>
<text x="835.30" y="368.20" font-size="12" fill="#343741" font-weight="400" text-anchor="start" letter-spacing="0.195" >Debian</text>
<circle cx="823" cy="388" r="6" fill="#D6BF57" fill-opacity="0.75"/>
<text x="835.30" y="392.20" font-size="12" fill="#343741" font-weight="400" text-anchor="start" letter-spacing="0.498" >ip-10-0-0-180.us-w...</text>
<circle cx="823" cy="412" r="6" fill="#B9A888" fill-opacity="0.75"/>
<text x="835.30" y="416.20" font-size="12" fill="#343741" font-weight="400" text-anchor="start" letter-spacing="-0.421" >RHEL7</text></svg></section>
<section class="panel" style="left:977px;top:215px;width:970px;height:384px"><h2 class="pt" style="top:8px;line-height:16px;letter-spacing:-0.018px">Events by rule group</h2><svg width="970" height="384" viewBox="977 215 970 384"><rect x="1027" y="266" width="7" height="275" fill="#e6e6e6"/>
<path d="M1021 265.5H1026.5V540.5H1772.5V546.5" fill="none" stroke="#ddd"/>
<path d="M1021 540.5H1026.5" stroke="#ddd"/>
<text x="1018.37" y="543.90" font-size="10.67" fill="#69707d" font-weight="400" text-anchor="end" letter-spacing="0.366" >0</text>
<path d="M1021 455.5H1026.5" stroke="#ddd"/>
<text x="1018.37" y="458.16" font-size="10.67" fill="#69707d" font-weight="400" text-anchor="end" letter-spacing="0.366" >5</text>
<path d="M1021 369.5H1026.5" stroke="#ddd"/>
<text x="1017.13" y="372.43" font-size="10.67" fill="#69707d" font-weight="400" text-anchor="end" letter-spacing="-0.867" >10</text>
<path d="M1021 283.5H1026.5" stroke="#ddd"/>
<text x="1017.13" y="286.69" font-size="10.67" fill="#69707d" font-weight="400" text-anchor="end" letter-spacing="-0.867" >15</text>
<path d="M1026.5 540.5V546.5" stroke="#ddd"/>
<path d="M1088.5 540.5V546.5" stroke="#ddd"/>
<text x="1088.79" y="557.80" font-size="10.67" fill="#69707d" font-weight="400" text-anchor="middle" letter-spacing="0.575" >00:00</text>
<path d="M1180.5 540.5V546.5" stroke="#ddd"/>
<text x="1181.09" y="557.80" font-size="10.67" fill="#69707d" font-weight="400" text-anchor="middle" letter-spacing="0.475" >03:00</text>
<path d="M1273.5 540.5V546.5" stroke="#ddd"/>
<text x="1273.44" y="557.80" font-size="10.67" fill="#69707d" font-weight="400" text-anchor="middle" letter-spacing="0.475" >06:00</text>
<path d="M1365.5 540.5V546.5" stroke="#ddd"/>
<text x="1365.79" y="557.80" font-size="10.67" fill="#69707d" font-weight="400" text-anchor="middle" letter-spacing="0.475" >09:00</text>
<path d="M1457.5 540.5V546.5" stroke="#ddd"/>
<text x="1457.89" y="557.80" font-size="10.67" fill="#69707d" font-weight="400" text-anchor="middle" letter-spacing="-0.025" >12:00</text>
<path d="M1550.5 540.5V546.5" stroke="#ddd"/>
<text x="1550.24" y="557.80" font-size="10.67" fill="#69707d" font-weight="400" text-anchor="middle" letter-spacing="-0.025" >15:00</text>
<path d="M1642.5 540.5V546.5" stroke="#ddd"/>
<text x="1642.61" y="557.80" font-size="10.67" fill="#69707d" font-weight="400" text-anchor="middle" letter-spacing="0.025" >18:00</text>
<path d="M1734.5 540.5V546.5" stroke="#ddd"/>
<text x="1734.91" y="557.80" font-size="10.67" fill="#69707d" font-weight="400" text-anchor="middle" letter-spacing="-0.075" >21:00</text>
<text x="1400.15" y="575.00" font-size="12" fill="#5f646f" font-weight="700" text-anchor="middle" letter-spacing="0.303" >timestamp per 30 minutes</text>
<g transform="translate(995.5,403) rotate(-90)"><text x="0.04" y="0.00" font-size="12" fill="#5f646f" font-weight="700" text-anchor="middle" letter-spacing="0.088" >Count</text></g>
<clipPath id="lc"><rect x="1027.5" y="260" width="760" height="290"/></clipPath><g clip-path="url(#lc)">
<path d="M1027.20 403.22 L1042.58 420.37 L1057.96 317.49 L1073.34 334.64 L1088.72 351.78 L1104.10 454.66 L1119.48 368.93 L1134.86 420.37 L1150.24 403.22 L1165.62 368.93 L1181.00 334.64 L1196.38 351.78 L1211.76 403.22 L1227.14 283.19 L1242.52 386.08 L1257.90 454.66 L1273.28 351.78 L1288.66 420.37 L1304.04 420.37 L1319.42 437.52 L1334.80 386.08 L1350.18 403.22 L1365.56 368.93 L1380.94 386.08 L1396.32 334.64 L1411.70 454.66 L1427.08 351.78 L1442.46 420.37 L1457.84 437.52 L1473.22 471.81" fill="none" stroke="#6092C0" stroke-width="2" stroke-linejoin="round"/>
<circle cx="1027.20" cy="403.22" r="2" fill="#6092C0"/>
<circle cx="1042.58" cy="420.37" r="2" fill="#6092C0"/>
<circle cx="1057.96" cy="317.49" r="2" fill="#6092C0"/>
<circle cx="1073.34" cy="334.64" r="2" fill="#6092C0"/>
<circle cx="1088.72" cy="351.78" r="2" fill="#6092C0"/>
<circle cx="1104.10" cy="454.66" r="2" fill="#6092C0"/>
<circle cx="1119.48" cy="368.93" r="2" fill="#6092C0"/>
<circle cx="1134.86" cy="420.37" r="2" fill="#6092C0"/>
<circle cx="1150.24" cy="403.22" r="2" fill="#6092C0"/>
<circle cx="1165.62" cy="368.93" r="2" fill="#6092C0"/>
<circle cx="1181.00" cy="334.64" r="2" fill="#6092C0"/>
<circle cx="1196.38" cy="351.78" r="2" fill="#6092C0"/>
<circle cx="1211.76" cy="403.22" r="2" fill="#6092C0"/>
<circle cx="1227.14" cy="283.19" r="2" fill="#6092C0"/>
<circle cx="1242.52" cy="386.08" r="2" fill="#6092C0"/>
<circle cx="1257.90" cy="454.66" r="2" fill="#6092C0"/>
<circle cx="1273.28" cy="351.78" r="2" fill="#6092C0"/>
<circle cx="1288.66" cy="420.37" r="2" fill="#6092C0"/>
<circle cx="1304.04" cy="420.37" r="2" fill="#6092C0"/>
<circle cx="1319.42" cy="437.52" r="2" fill="#6092C0"/>
<circle cx="1334.80" cy="386.08" r="2" fill="#6092C0"/>
<circle cx="1350.18" cy="403.22" r="2" fill="#6092C0"/>
<circle cx="1365.56" cy="368.93" r="2" fill="#6092C0"/>
<circle cx="1380.94" cy="386.08" r="2" fill="#6092C0"/>
<circle cx="1396.32" cy="334.64" r="2" fill="#6092C0"/>
<circle cx="1411.70" cy="454.66" r="2" fill="#6092C0"/>
<circle cx="1427.08" cy="351.78" r="2" fill="#6092C0"/>
<circle cx="1442.46" cy="420.37" r="2" fill="#6092C0"/>
<circle cx="1457.84" cy="437.52" r="2" fill="#6092C0"/>
<circle cx="1473.22" cy="471.81" r="2" fill="#6092C0"/>
<path d="M1027.20 437.52 L1042.58 386.08 L1057.96 386.08 L1073.34 420.37 L1088.72 437.52 L1104.10 420.37 L1119.48 454.66 L1134.86 403.22 L1150.24 420.37 L1165.62 283.19 L1181.00 437.52 L1196.38 386.08 L1211.76 454.66 L1227.14 334.64 L1242.52 351.78 L1257.90 403.22 L1273.28 437.52 L1288.66 488.96 L1304.04 454.66 L1319.42 403.22 L1334.80 386.08 L1350.18 437.52 L1365.56 300.34 L1380.94 334.64 L1396.32 386.08 L1411.70 420.37 L1427.08 317.49 L1442.46 300.34 L1457.84 437.52 L1473.22 488.96" fill="none" stroke="#54B399" stroke-width="2" stroke-linejoin="round"/>
<circle cx="1027.20" cy="437.52" r="2" fill="#54B399"/>
<circle cx="1042.58" cy="386.08" r="2" fill="#54B399"/>
<circle cx="1057.96" cy="386.08" r="2" fill="#54B399"/>
<circle cx="1073.34" cy="420.37" r="2" fill="#54B399"/>
<circle cx="1088.72" cy="437.52" r="2" fill="#54B399"/>
<circle cx="1104.10" cy="420.37" r="2" fill="#54B399"/>
<circle cx="1119.48" cy="454.66" r="2" fill="#54B399"/>
<circle cx="1134.86" cy="403.22" r="2" fill="#54B399"/>
<circle cx="1150.24" cy="420.37" r="2" fill="#54B399"/>
<circle cx="1165.62" cy="283.19" r="2" fill="#54B399"/>
<circle cx="1181.00" cy="437.52" r="2" fill="#54B399"/>
<circle cx="1196.38" cy="386.08" r="2" fill="#54B399"/>
<circle cx="1211.76" cy="454.66" r="2" fill="#54B399"/>
<circle cx="1227.14" cy="334.64" r="2" fill="#54B399"/>
<circle cx="1242.52" cy="351.78" r="2" fill="#54B399"/>
<circle cx="1257.90" cy="403.22" r="2" fill="#54B399"/>
<circle cx="1273.28" cy="437.52" r="2" fill="#54B399"/>
<circle cx="1288.66" cy="488.96" r="2" fill="#54B399"/>
<circle cx="1304.04" cy="454.66" r="2" fill="#54B399"/>
<circle cx="1319.42" cy="403.22" r="2" fill="#54B399"/>
<circle cx="1334.80" cy="386.08" r="2" fill="#54B399"/>
<circle cx="1350.18" cy="437.52" r="2" fill="#54B399"/>
<circle cx="1365.56" cy="300.34" r="2" fill="#54B399"/>
<circle cx="1380.94" cy="334.64" r="2" fill="#54B399"/>
<circle cx="1396.32" cy="386.08" r="2" fill="#54B399"/>
<circle cx="1411.70" cy="420.37" r="2" fill="#54B399"/>
<circle cx="1427.08" cy="317.49" r="2" fill="#54B399"/>
<circle cx="1442.46" cy="300.34" r="2" fill="#54B399"/>
<circle cx="1457.84" cy="437.52" r="2" fill="#54B399"/>
<circle cx="1473.22" cy="488.96" r="2" fill="#54B399"/>
<path d="M1027.20 454.66 L1042.58 420.37 L1057.96 351.78 L1073.34 351.78 L1088.72 351.78 L1104.10 317.49 L1119.48 351.78 L1134.86 420.37 L1150.24 368.93 L1165.62 300.34 L1181.00 334.64 L1196.38 471.81 L1211.76 403.22 L1227.14 351.78 L1242.52 403.22 L1257.90 386.08 L1273.28 403.22 L1288.66 420.37 L1304.04 420.37 L1319.42 420.37 L1334.80 420.37 L1350.18 351.78 L1365.56 368.93 L1380.94 368.93 L1396.32 386.08 L1411.70 506.11 L1427.08 454.66 L1442.46 420.37 L1457.84 351.78 L1473.22 523.25" fill="none" stroke="#D36086" stroke-width="2" stroke-linejoin="round"/>
<circle cx="1027.20" cy="454.66" r="2" fill="#D36086"/>
<circle cx="1042.58" cy="420.37" r="2" fill="#D36086"/>
<circle cx="1057.96" cy="351.78" r="2" fill="#D36086"/>
<circle cx="1073.34" cy="351.78" r="2" fill="#D36086"/>
<circle cx="1088.72" cy="351.78" r="2" fill="#D36086"/>
<circle cx="1104.10" cy="317.49" r="2" fill="#D36086"/>
<circle cx="1119.48" cy="351.78" r="2" fill="#D36086"/>
<circle cx="1134.86" cy="420.37" r="2" fill="#D36086"/>
<circle cx="1150.24" cy="368.93" r="2" fill="#D36086"/>
<circle cx="1165.62" cy="300.34" r="2" fill="#D36086"/>
<circle cx="1181.00" cy="334.64" r="2" fill="#D36086"/>
<circle cx="1196.38" cy="471.81" r="2" fill="#D36086"/>
<circle cx="1211.76" cy="403.22" r="2" fill="#D36086"/>
<circle cx="1227.14" cy="351.78" r="2" fill="#D36086"/>
<circle cx="1242.52" cy="403.22" r="2" fill="#D36086"/>
<circle cx="1257.90" cy="386.08" r="2" fill="#D36086"/>
<circle cx="1273.28" cy="403.22" r="2" fill="#D36086"/>
<circle cx="1288.66" cy="420.37" r="2" fill="#D36086"/>
<circle cx="1304.04" cy="420.37" r="2" fill="#D36086"/>
<circle cx="1319.42" cy="420.37" r="2" fill="#D36086"/>
<circle cx="1334.80" cy="420.37" r="2" fill="#D36086"/>
<circle cx="1350.18" cy="351.78" r="2" fill="#D36086"/>
<circle cx="1365.56" cy="368.93" r="2" fill="#D36086"/>
<circle cx="1380.94" cy="368.93" r="2" fill="#D36086"/>
<circle cx="1396.32" cy="386.08" r="2" fill="#D36086"/>
<circle cx="1411.70" cy="506.11" r="2" fill="#D36086"/>
<circle cx="1427.08" cy="454.66" r="2" fill="#D36086"/>
<circle cx="1442.46" cy="420.37" r="2" fill="#D36086"/>
<circle cx="1457.84" cy="351.78" r="2" fill="#D36086"/>
<circle cx="1473.22" cy="523.25" r="2" fill="#D36086"/>
<path d="M1027.20 454.66 L1042.58 420.37 L1057.96 351.78 L1073.34 351.78 L1088.72 351.78 L1104.10 317.49 L1119.48 351.78 L1134.86 420.37 L1150.24 368.93 L1165.62 300.34 L1181.00 334.64 L1196.38 471.81 L1211.76 403.22 L1227.14 351.78 L1242.52 403.22 L1257.90 386.08 L1273.28 403.22 L1288.66 420.37 L1304.04 420.37 L1319.42 420.37 L1334.80 420.37 L1350.18 351.78 L1365.56 368.93 L1380.94 368.93 L1396.32 386.08 L1411.70 506.11 L1427.08 454.66 L1442.46 420.37 L1457.84 351.78 L1473.22 523.25" fill="none" stroke="#9170B8" stroke-width="2" stroke-linejoin="round"/>
<circle cx="1027.20" cy="454.66" r="2" fill="#9170B8"/>
<circle cx="1042.58" cy="420.37" r="2" fill="#9170B8"/>
<circle cx="1057.96" cy="351.78" r="2" fill="#9170B8"/>
<circle cx="1073.34" cy="351.78" r="2" fill="#9170B8"/>
<circle cx="1088.72" cy="351.78" r="2" fill="#9170B8"/>
<circle cx="1104.10" cy="317.49" r="2" fill="#9170B8"/>
<circle cx="1119.48" cy="351.78" r="2" fill="#9170B8"/>
<circle cx="1134.86" cy="420.37" r="2" fill="#9170B8"/>
<circle cx="1150.24" cy="368.93" r="2" fill="#9170B8"/>
<circle cx="1165.62" cy="300.34" r="2" fill="#9170B8"/>
<circle cx="1181.00" cy="334.64" r="2" fill="#9170B8"/>
<circle cx="1196.38" cy="471.81" r="2" fill="#9170B8"/>
<circle cx="1211.76" cy="403.22" r="2" fill="#9170B8"/>
<circle cx="1227.14" cy="351.78" r="2" fill="#9170B8"/>
<circle cx="1242.52" cy="403.22" r="2" fill="#9170B8"/>
<circle cx="1257.90" cy="386.08" r="2" fill="#9170B8"/>
<circle cx="1273.28" cy="403.22" r="2" fill="#9170B8"/>
<circle cx="1288.66" cy="420.37" r="2" fill="#9170B8"/>
<circle cx="1304.04" cy="420.37" r="2" fill="#9170B8"/>
<circle cx="1319.42" cy="420.37" r="2" fill="#9170B8"/>
<circle cx="1334.80" cy="420.37" r="2" fill="#9170B8"/>
<circle cx="1350.18" cy="351.78" r="2" fill="#9170B8"/>
<circle cx="1365.56" cy="368.93" r="2" fill="#9170B8"/>
<circle cx="1380.94" cy="368.93" r="2" fill="#9170B8"/>
<circle cx="1396.32" cy="386.08" r="2" fill="#9170B8"/>
<circle cx="1411.70" cy="506.11" r="2" fill="#9170B8"/>
<circle cx="1427.08" cy="454.66" r="2" fill="#9170B8"/>
<circle cx="1442.46" cy="420.37" r="2" fill="#9170B8"/>
<circle cx="1457.84" cy="351.78" r="2" fill="#9170B8"/>
<circle cx="1473.22" cy="523.25" r="2" fill="#9170B8"/>
</g>
<circle cx="1792" cy="268" r="6" fill="#6092C0" fill-opacity="1.0"/>
<text x="1804.30" y="272.20" font-size="12" fill="#343741" font-weight="400" text-anchor="start" letter-spacing="0.386" >yara</text>
<circle cx="1792" cy="292" r="6" fill="#54B399" fill-opacity="1.0"/>
<text x="1804.30" y="296.20" font-size="12" fill="#343741" font-weight="400" text-anchor="start" letter-spacing="0.498" >virustotal</text>
<circle cx="1792" cy="316" r="6" fill="#D36086" fill-opacity="1.0"/>
<text x="1804.30" y="320.20" font-size="12" fill="#343741" font-weight="400" text-anchor="start" letter-spacing="0.560" >rootcheck</text>
<circle cx="1792" cy="340" r="6" fill="#9170B8" fill-opacity="1.0"/>
<text x="1804.30" y="344.20" font-size="12" fill="#343741" font-weight="400" text-anchor="start" letter-spacing="0.454" >wazuh</text></svg></section>
<section class="panel" style="left:8px;top:607px;width:477px;height:244px"><h2 class="pt" style="top:8px;line-height:16px;letter-spacing:-0.147px">Rule group</h2><svg width="477" height="244" viewBox="8 607 477 244"><path d="M170.10 667.85A76.9 76.9 0 0 1 246.90 748.64L226.03 747.58A56.0 56.0 0 0 0 170.10 688.75Z" fill="#6092c0"/>
<path d="M246.90 748.64A76.9 76.9 0 0 1 165.81 821.53L166.97 800.66A56.0 56.0 0 0 0 226.03 747.58Z" fill="#d36086"/>
<path d="M165.81 821.53A76.9 76.9 0 0 1 93.31 740.73L114.18 741.82A56.0 56.0 0 0 0 166.97 800.66Z" fill="#9170b8"/>
<path d="M93.31 740.73A76.9 76.9 0 0 1 170.10 667.85L170.10 688.75A56.0 56.0 0 0 0 114.18 741.82Z" fill="#54b399"/>
<path d="M225.03 747.53L247.90 748.69" stroke="#fff" stroke-width="1.9"/>
<path d="M167.03 799.66L165.75 822.53" stroke="#fff" stroke-width="1.9"/>
<path d="M115.18 741.87L92.31 740.67" stroke="#fff" stroke-width="1.9"/>
<path d="M170.10 689.75L170.10 666.85" stroke="#fff" stroke-width="1.9"/><circle cx="339" cy="660" r="6" fill="#6092C0" fill-opacity="1.0"/>
<text x="351.30" y="664.20" font-size="12" fill="#343741" font-weight="400" text-anchor="start" letter-spacing="0.386" >yara</text>
<circle cx="339" cy="684" r="6" fill="#D36086" fill-opacity="1.0"/>
<text x="351.30" y="688.20" font-size="12" fill="#343741" font-weight="400" text-anchor="start" letter-spacing="0.560" >rootcheck</text>
<circle cx="339" cy="708" r="6" fill="#9170B8" fill-opacity="1.0"/>
<text x="351.30" y="712.20" font-size="12" fill="#343741" font-weight="400" text-anchor="start" letter-spacing="0.454" >wazuh</text>
<circle cx="339" cy="732" r="6" fill="#54B399" fill-opacity="1.0"/>
<text x="351.30" y="736.20" font-size="12" fill="#343741" font-weight="400" text-anchor="start" letter-spacing="0.498" >virustotal</text></svg></section>
<section class="panel" style="left:493px;top:607px;width:477px;height:244px"><h2 class="pt" style="top:8px;line-height:16px;letter-spacing:0.065px">Source file</h2><svg width="477" height="244" viewBox="493 607 477 244"><path d="M655.10 667.85A76.9 76.9 0 0 1 731.43 735.38L710.68 737.93A56.0 56.0 0 0 0 655.10 688.75Z" fill="#dcc970"/>
<path d="M731.43 735.38A76.9 76.9 0 0 1 678.86 817.89L672.40 798.01A56.0 56.0 0 0 0 710.68 737.93Z" fill="#c4b59a"/>
<path d="M678.86 817.89A76.9 76.9 0 0 1 591.80 788.42L609.00 776.55A56.0 56.0 0 0 0 672.40 798.01Z" fill="#e09c61"/>
<path d="M591.80 788.42A76.9 76.9 0 0 1 589.81 704.11L607.56 715.16A56.0 56.0 0 0 0 609.00 776.55Z" fill="#b77c6f"/>
<path d="M589.81 704.11A76.9 76.9 0 0 1 655.10 667.85L655.10 688.75A56.0 56.0 0 0 0 607.56 715.16Z" fill="#eb7d67"/>
<path d="M709.69 738.05L732.42 735.26" stroke="#fff" stroke-width="1.9"/>
<path d="M672.10 797.06L679.17 818.84" stroke="#fff" stroke-width="1.9"/>
<path d="M609.83 775.98L590.98 788.99" stroke="#fff" stroke-width="1.9"/>
<path d="M608.41 715.69L588.97 703.58" stroke="#fff" stroke-width="1.9"/>
<path d="M655.10 689.75L655.10 666.85" stroke="#fff" stroke-width="1.9"/><circle cx="824" cy="660" r="6" fill="#D6BF57" fill-opacity="0.85"/>
<text x="836.30" y="664.20" font-size="12" fill="#343741" font-weight="400" text-anchor="start" letter-spacing="0.523" >/var/opt/amazing-file</text>
<circle cx="824" cy="684" r="6" fill="#B9A888" fill-opacity="0.85"/>
<text x="836.30" y="688.20" font-size="12" fill="#343741" font-weight="400" text-anchor="start" letter-spacing="0.600" >/etc/data/file</text>
<circle cx="824" cy="708" r="6" fill="#DA8B45" fill-opacity="0.85"/>
<text x="836.30" y="712.20" font-size="12" fill="#343741" font-weight="400" text-anchor="start" letter-spacing="0.538" >/etc/sample/script</text>
<circle cx="824" cy="732" r="6" fill="#AA6556" fill-opacity="0.85"/>
<text x="836.30" y="736.20" font-size="12" fill="#343741" font-weight="400" text-anchor="start" letter-spacing="0.551" >/tmp/virus/notavirus</text>
<circle cx="824" cy="756" r="6" fill="#E7664C" fill-opacity="0.85"/>
<text x="836.30" y="760.20" font-size="12" fill="#343741" font-weight="400" text-anchor="start" letter-spacing="0.587" >/root/super-script</text></svg></section>
<section class="panel" style="left:977px;top:607px;width:477px;height:244px"><h2 class="pt" style="top:8px;line-height:16px;letter-spacing:0.075px">Yara scanned files</h2><svg width="477" height="244" viewBox="977 607 477 244"><path d="M1139.10 667.85A76.9 76.9 0 0 1 1214.06 727.58L1193.69 732.25A56.0 56.0 0 0 0 1139.10 688.75Z" fill="#6ebea8"/>
<path d="M1214.06 727.58A76.9 76.9 0 0 1 1172.57 813.98L1163.47 795.17A56.0 56.0 0 0 0 1193.69 732.25Z" fill="#78a2c9"/>
<path d="M1172.57 813.98A76.9 76.9 0 0 1 1086.65 800.99L1100.91 785.71A56.0 56.0 0 0 0 1163.47 795.17Z" fill="#da7898"/>
<path d="M1086.65 800.99A76.9 76.9 0 0 1 1067.40 716.94L1086.89 724.50A56.0 56.0 0 0 0 1100.91 785.71Z" fill="#a285c3"/>
<path d="M1067.40 716.94A76.9 76.9 0 0 1 1139.10 667.85L1139.10 688.75A56.0 56.0 0 0 0 1086.89 724.50Z" fill="#d29fba"/>
<path d="M1192.71 732.47L1215.03 727.36" stroke="#fff" stroke-width="1.9"/>
<path d="M1163.04 794.27L1173.00 814.88" stroke="#fff" stroke-width="1.9"/>
<path d="M1101.59 784.97L1085.97 801.72" stroke="#fff" stroke-width="1.9"/>
<path d="M1087.82 724.86L1066.47 716.58" stroke="#fff" stroke-width="1.9"/>
<path d="M1139.10 689.75L1139.10 666.85" stroke="#fff" stroke-width="1.9"/><circle cx="1308" cy="660" r="6" fill="#54B399" fill-opacity="0.85"/>
<text x="1320.30" y="664.20" font-size="12" fill="#343741" font-weight="400" text-anchor="start" letter-spacing="0.419" >/home/wazuh-user/...</text>
<circle cx="1308" cy="684" r="6" fill="#6092C0" fill-opacity="0.85"/>
<text x="1320.30" y="688.20" font-size="12" fill="#343741" font-weight="400" text-anchor="start" letter-spacing="0.419" >/home/wazuh-user/...</text>
<circle cx="1308" cy="708" r="6" fill="#D36086" fill-opacity="0.85"/>
<text x="1320.30" y="712.20" font-size="12" fill="#343741" font-weight="400" text-anchor="start" letter-spacing="0.419" >/home/wazuh-user/...</text>
<circle cx="1308" cy="732" r="6" fill="#9170B8" fill-opacity="0.85"/>
<text x="1320.30" y="736.20" font-size="12" fill="#343741" font-weight="400" text-anchor="start" letter-spacing="0.419" >/home/wazuh-user/...</text>
<circle cx="1308" cy="756" r="6" fill="#CA8EAE" fill-opacity="0.85"/>
<text x="1320.30" y="760.20" font-size="12" fill="#343741" font-weight="400" text-anchor="start" letter-spacing="0.419" >/home/wazuh-user/...</text></svg></section>
<section class="panel" style="left:1462px;top:607px;width:485px;height:244px"><h2 class="pt" style="top:8px;line-height:16px;letter-spacing:0.105px">Rootcheck data title</h2><svg width="485" height="244" viewBox="1462 607 485 244"><path d="M1624.05 667.85A76.9 76.9 0 1 1 1554.07 712.86L1573.09 721.53A56.0 56.0 0 1 0 1624.05 688.75Z" fill="#6ebea8"/>
<path d="M1554.07 712.86A76.9 76.9 0 0 1 1567.99 692.11L1583.23 706.42A56.0 56.0 0 0 0 1573.09 721.53Z" fill="#78a2c9"/>
<path d="M1567.99 692.11A76.9 76.9 0 0 1 1585.02 678.49L1595.63 696.50A56.0 56.0 0 0 0 1583.23 706.42Z" fill="#da7898"/>
<path d="M1585.02 678.49A76.9 76.9 0 0 1 1605.32 670.17L1610.41 690.44A56.0 56.0 0 0 0 1595.63 696.50Z" fill="#a285c3"/>
<path d="M1605.32 670.17A76.9 76.9 0 0 1 1624.05 667.85L1624.05 688.75A56.0 56.0 0 0 0 1610.41 690.44Z" fill="#d29fba"/>
<path d="M1574.00 721.94L1553.16 712.45" stroke="#fff" stroke-width="1.9"/>
<path d="M1583.96 707.10L1567.26 691.42" stroke="#fff" stroke-width="1.9"/>
<path d="M1596.14 697.36L1584.51 677.63" stroke="#fff" stroke-width="1.9"/>
<path d="M1610.65 691.41L1605.07 669.20" stroke="#fff" stroke-width="1.9"/>
<path d="M1624.05 689.75L1624.05 666.85" stroke="#fff" stroke-width="1.9"/><circle cx="1793" cy="660" r="6" fill="#54B399" fill-opacity="0.85"/>
<text x="1805.30" y="664.20" font-size="12" fill="#343741" font-weight="400" text-anchor="start" letter-spacing="0.223" >Trojaned version of ...</text>
<circle cx="1793" cy="684" r="6" fill="#6092C0" fill-opacity="0.85"/>
<text x="1805.30" y="688.20" font-size="12" fill="#343741" font-weight="400" text-anchor="start" letter-spacing="0.328" >Rootkit 'Volc' detect...</text>
<circle cx="1793" cy="708" r="6" fill="#D36086" fill-opacity="0.85"/>
<text x="1805.30" y="712.20" font-size="12" fill="#343741" font-weight="400" text-anchor="start" letter-spacing="0.251" >Rootkit 'Adore' dete...</text>
<circle cx="1793" cy="732" r="6" fill="#9170B8" fill-opacity="0.85"/>
<text x="1805.30" y="736.20" font-size="12" fill="#343741" font-weight="400" text-anchor="start" letter-spacing="0.358" >Rootkit 'Monkit' det...</text>
<circle cx="1793" cy="756" r="6" fill="#CA8EAE" fill-opacity="0.85"/>
<text x="1805.30" y="760.20" font-size="12" fill="#343741" font-weight="400" text-anchor="start" letter-spacing="0.280" >Rootkit 'Omega' det...</text></svg></section>
<section class="panel" style="left:8px;top:859px;width:961px;height:100px"><h2 class="pt" style="top:8px;line-height:16px;letter-spacing:0.028px">Top 10 agents by rule group</h2><svg width="961" height="100" viewBox="8 859 961 100"><rect x="258" y="910" width="134.5" height="40" fill="#D36086"/>
<rect x="392.5" y="910" width="133" height="40" fill="#9170B8"/>
<rect x="525.5" y="910" width="114.5" height="40" fill="#6092C0"/>
<rect x="640" y="910" width="106.5" height="40" fill="#54B399"/>
<path d="M252.5 909.5H258.5V950M252.5 927.5H258.5" fill="none" stroke="#ddd"/>
<text x="249.77" y="930.70" font-size="10.67" fill="#69707d" font-weight="400" text-anchor="end" letter-spacing="0.272" >Amazon</text>
<circle cx="823" cy="912" r="6" fill="#D36086" fill-opacity="1.0"/>
<text x="835.30" y="916.20" font-size="12" fill="#343741" font-weight="400" text-anchor="start" letter-spacing="0.560" >rootcheck</text>
<circle cx="823" cy="936" r="6" fill="#9170B8" fill-opacity="1.0"/>
<text x="835.30" y="940.20" font-size="12" fill="#343741" font-weight="400" text-anchor="start" letter-spacing="0.454" >wazuh</text></svg></section>
<section class="panel" style="left:977px;top:859px;width:970px;height:100px"><h2 class="pt" style="top:8px;line-height:16px;letter-spacing:0.066px">Rule description</h2><svg width="970" height="100" viewBox="977 859 970 100"><path d="M986 932.5H1928.5" stroke="#d3dae6"/>
<g fill="none" stroke="#006BB4" stroke-width="1"><path d="M1007.5 910.2V917.2M1005.4 915.4L1007.5 917.4L1009.6 915.4" stroke-linecap="round"/><path d="M1002.3 917.6V919.9Q1002.3 920.7 1003.1 920.7H1011.7Q1012.5 920.7 1012.5 919.9V917.6" stroke-opacity="0.75" stroke-linecap="round"/></g></svg></section>
</body></html>
